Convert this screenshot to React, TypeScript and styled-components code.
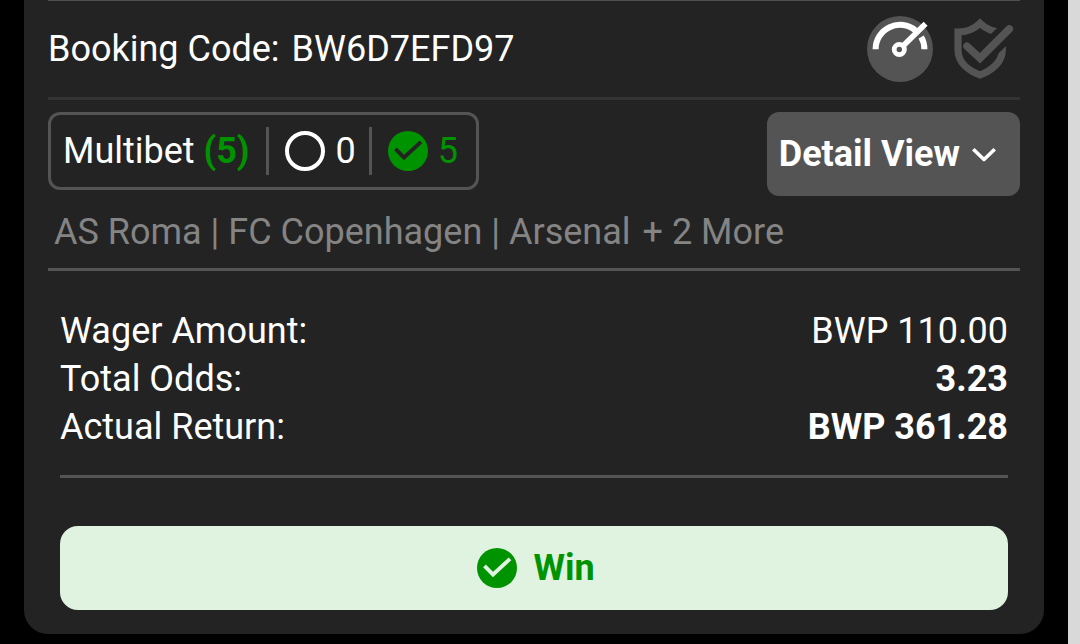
import React from "react";
import styled, { createGlobalStyle } from "styled-components";

const GlobalStyle = createGlobalStyle`
  *, *::before, *::after { box-sizing: border-box; }
  body {
    margin: 0;
    background: #000;
    color: #fff;
    font-family: Roboto, "Liberation Sans", sans-serif;
    font-size: 36px;
    line-height: 48px;
  }
`;

const Page = styled.div`
  min-height: 100vh;
  padding: 0 24px;
  border-right: 12px solid #d9d9d9;
`;

const Card = styled.main`
  padding: 0 24px 24px;
  background: #232323;
  border-radius: 0 0 24px 24px;
`;

const Header = styled.header`
  display: flex;
  align-items: center;
  justify-content: space-between;
  height: 100px;
  border-top: 1px solid #4f4f4f;
  border-bottom: 3px solid #333;
`;

const BookingCode = styled.p`
  display: flex;
  gap: 12px;
  margin: 0;
`;

const HeaderActions = styled.div`
  display: flex;
  align-items: center;
  gap: 18px;
  padding-right: 3px;
`;

const IconButton = styled.button<{ $filled?: boolean }>`
  display: flex;
  width: 66px;
  height: 66px;
  padding: 0;
  border: 0;
  border-radius: 50%;
  background: ${(p) => (p.$filled ? "#545454" : "transparent")};
  cursor: pointer;
`;

const BetRow = styled.section`
  display: flex;
  align-items: flex-start;
  justify-content: space-between;
  padding-top: 12px;
`;

const BetSummary = styled.div`
  display: flex;
  padding: 12px 18px 12px 12px;
  border: 3px solid #545454;
  border-radius: 12px;
`;

const BetCell = styled.div<{ $won?: boolean }>`
  display: flex;
  align-items: center;
  gap: 10px;
  color: ${(p) => (p.$won ? "#009300" : "#fff")};

  & + & {
    margin-left: 17px;
    padding-left: 16px;
    border-left: 3px solid #545454;
  }

  & + & + & {
    margin-left: 13px;
  }
`;

const Count = styled.strong`
  color: #009300;
  font-weight: 700;
`;

const Ring = styled.span`
  width: 40px;
  height: 40px;
  border: 4px solid #fff;
  border-radius: 50%;
`;

const ViewButton = styled.button`
  display: flex;
  align-items: center;
  gap: 6px;
  padding: 18px;
  padding-left: 12px;
  border: 0;
  border-radius: 12px;
  background: #545454;
  color: #fff;
  font: inherit;
  font-weight: 700;
  cursor: pointer;
`;

const Teams = styled.p`
  display: flex;
  gap: 12px;
  margin: 12px 0 0;
  padding: 0 6px 12px;
  border-bottom: 3px solid #545454;
  color: #848484;
`;

const Totals = styled.dl`
  margin: 36px 12px 48px;
  padding-bottom: 24px;
  border-bottom: 3px solid #545454;
`;

const TotalRow = styled.div`
  display: flex;
  justify-content: space-between;
`;

const Label = styled.dt``;

const Value = styled.dd<{ $bold?: boolean }>`
  margin: 0;
  font-weight: ${(p) => (p.$bold ? 700 : 400)};
`;

const Result = styled.div`
  display: flex;
  align-items: center;
  justify-content: center;
  gap: 16px;
  margin: 0 12px;
  padding: 18px 14px 18px 18px;
  border-radius: 18px;
  background: #dff3e0;
  color: #009300;
  font-weight: 700;
`;

const CheckCircle = ({ tick }: { tick: string }) => (
  <svg width="40" height="40" viewBox="0 0 40 40" aria-hidden="true">
    <circle cx="20" cy="20" r="20" fill="#009300" />
    <path d="M7.5 17.8 L16 26.5 L33 10.8" fill="none" stroke={tick} strokeWidth="3.8" />
  </svg>
);

const GaugeIcon = () => (
  <svg width="66" height="66" viewBox="0 0 66 66" aria-hidden="true">
    <g fill="none" stroke="#fff">
      <path d="M8.6 33.3 A24.4 24.4 0 0 1 48.5 14.4" strokeWidth="6" />
      <path d="M54.2 21.1 A24.4 24.4 0 0 1 57.4 33.3" strokeWidth="6" />
      <path d="M36 30 L58.6 7.8" strokeWidth="5.6" />
      <circle cx="32.3" cy="33.5" r="5.1" strokeWidth="4.8" />
    </g>
  </svg>
);

const ShieldIcon = () => (
  <svg width="66" height="66" viewBox="0 0 66 66" aria-hidden="true">
    <g fill="none">
      <path
        d="M29 7.2 C23.5 12.6 15.5 16 7 16 V34 C7 46 17 54.5 29 59 C41 54.5 51.3 46 51.3 34 V16 C42.5 16 34.5 12.6 29 7.2 Z"
        stroke="#545454"
        strokeWidth="7.2"
      />
      <path d="M38 33.5 L66 5.5" stroke="#232323" strokeWidth="19" />
      <path
        d="M16 30.2 L29 42.3 L58.3 13"
        stroke="#545454"
        strokeWidth="7.6"
        strokeLinecap="round"
      />
    </g>
  </svg>
);

const ChevronIcon = () => (
  <svg width="36" height="36" viewBox="0 0 36 36" aria-hidden="true">
    <path d="M7.3 13.2 L18 23.5 L28.7 13.2" fill="none" stroke="#fff" strokeWidth="3.6" strokeLinejoin="round" />
  </svg>
);

const totals = [
  { label: "Wager Amount:", value: "BWP 110.00", bold: false },
  { label: "Total Odds:", value: "3.23", bold: true },
  { label: "Actual Return:", value: "BWP 361.28", bold: true },
];

export default function App() {
  return (
    <>
      <GlobalStyle />
      <Page>
        <Card>
          <Header>
            <BookingCode>
              <span>Booking Code:</span>
              <span>BW6D7EFD97</span>
            </BookingCode>
            <HeaderActions>
              <IconButton type="button" aria-label="Boost" $filled>
                <GaugeIcon />
              </IconButton>
              <IconButton type="button" aria-label="Protection">
                <ShieldIcon />
              </IconButton>
            </HeaderActions>
          </Header>

          <BetRow>
            <BetSummary>
              <BetCell>
                <span>
                  Multibet <Count>(5)</Count>
                </span>
              </BetCell>
              <BetCell>
                <Ring />
                <span>0</span>
              </BetCell>
              <BetCell $won>
                <CheckCircle tick="#232323" />
                <span>5</span>
              </BetCell>
            </BetSummary>
            <ViewButton type="button">
              Detail View
              <ChevronIcon />
            </ViewButton>
          </BetRow>

          <Teams>
            <span>AS Roma | FC Copenhagen | Arsenal</span>
            <span>+ 2 More</span>
          </Teams>

          <Totals>
            {totals.map((row) => (
              <TotalRow key={row.label}>
                <Label>{row.label}</Label>
                <Value $bold={row.bold}>{row.value}</Value>
              </TotalRow>
            ))}
          </Totals>

          <Result>
            <CheckCircle tick="#dff3e0" />
            <span>Win</span>
          </Result>
        </Card>
      </Page>
    </>
  );
}
